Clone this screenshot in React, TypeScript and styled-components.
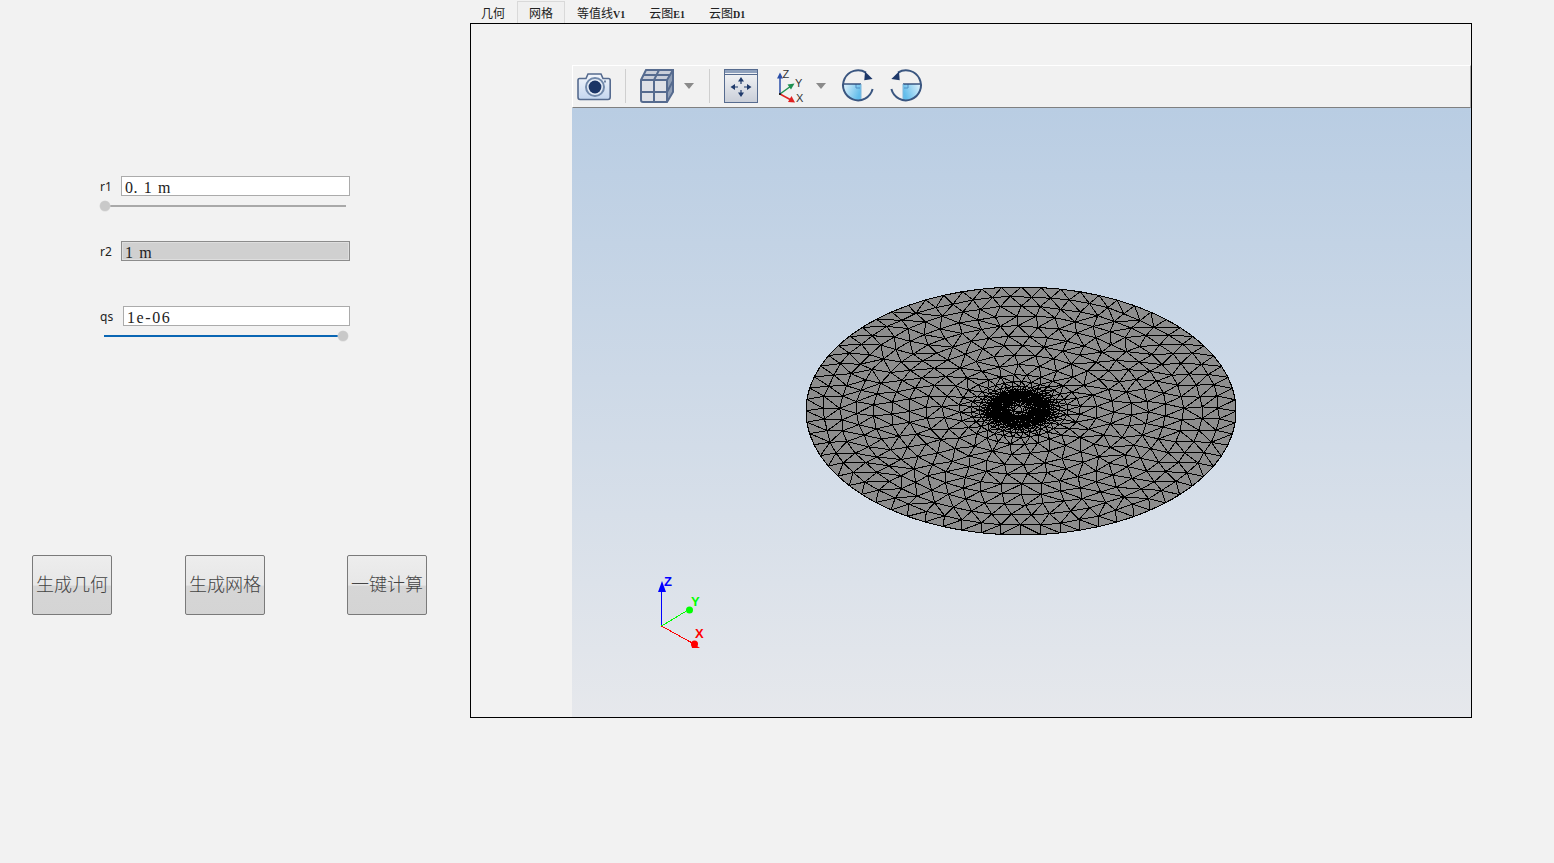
import { useMemo } from "react";
import styled, { createGlobalStyle } from "styled-components";

const CJK = `"Noto Sans CJK SC", "Liberation Serif", serif`;
const SERIF = `"Liberation Serif", "Noto Sans CJK SC", serif`;

const GlobalStyle = createGlobalStyle`
  html, body { margin: 0; padding: 0; background: #f2f2f2; }
`;

const Page = styled.div`
  display: flex;
  width: 1554px;
  height: 863px;
  overflow: hidden;
  background: #f2f2f2;
`;

const LeftPanel = styled.div`
  width: 470px;
  flex: none;
  display: flex;
  flex-direction: column;
  padding-top: 176px;
  box-sizing: border-box;
`;

const FieldRow = styled.div<{ $top?: number }>`
  display: flex;
  align-items: center;
  height: 20px;
  margin: ${(p) => p.$top ?? 0}px 0 0 100px;
  width: 250px;
`;

const FieldLabel = styled.label<{ $w: number }>`
  width: ${(p) => p.$w}px;
  flex: none;
  font: 12px "Noto Sans", sans-serif;
  color: #222;
`;

const ValueBox = styled.div<{ $off?: boolean; $spread?: number }>`
  flex: 1;
  height: 20px;
  box-sizing: border-box;
  border: 1px solid ${(p) => (p.$off ? "#8c8c8c" : "#ababab")};
  background: ${(p) => (p.$off ? "#d0d0d0" : "#fff")};
  box-shadow: ${(p) => (p.$off ? "inset 0 0 0 1px #dedede" : "none")};
  padding: 2px 0 0 3px;
  font: 16px/18px ${SERIF};
  letter-spacing: ${(p) => p.$spread ?? 0.6}px;
  word-spacing: 1px;
  color: #222;
  white-space: pre;
`;

const SliderTrack = styled.div<{ $left: number; $width: number; $on?: boolean }>`
  position: relative;
  height: 2px;
  margin: 9px 0 0 ${(p) => p.$left}px;
  width: ${(p) => p.$width}px;
  background: ${(p) => (p.$on ? "#0a66b4" : "#a9a9a9")};
`;

const SliderKnob = styled.span<{ $x: number }>`
  position: absolute;
  left: ${(p) => p.$x}px;
  top: -4px;
  width: 10px;
  height: 10px;
  border-radius: 50%;
  background: #c9c9c9;
  box-shadow: 0 0 0 0.5px #d8d8d8;
`;

const ButtonRow = styled.div`
  display: flex;
  margin-top: 218px;
  padding-left: 32px;
`;

const ActionButton = styled.button<{ $left?: number }>`
  width: 80px;
  height: 60px;
  margin-left: ${(p) => p.$left ?? 0}px;
  padding: 0 0 4px;
  box-sizing: border-box;
  border: 1px solid #7a7a7a;
  border-radius: 2px;
  background: linear-gradient(#ededed 0%, #e7e7e7 50%, #d6d6d6 52%, #d4d4d4 100%);
  font: 18px ${CJK};
  font-weight: 300;
  color: #444;
  white-space: nowrap;
`;

const RightPanel = styled.div`
  width: 1002px;
  flex: none;
  display: flex;
  flex-direction: column;
`;

const TabBar = styled.div`
  display: flex;
  height: 23px;
  margin-left: -1px;
  align-items: flex-end;
`;

const Tab = styled.div<{ $active?: boolean }>`
  height: 22px;
  box-sizing: border-box;
  padding: 2px 11px 0;
  border: 1px solid ${(p) => (p.$active ? "#d9d9d9" : "transparent")};
  border-bottom: none;
  background: ${(p) => (p.$active ? "#f0f0f0" : "transparent")};
  font: 12px/17px ${CJK};
  color: #222;
  white-space: nowrap;
`;

const TabMark = styled.span`
  font: bold 10px ${SERIF};
`;

const Frame = styled.div`
  height: 695px;
  box-sizing: border-box;
  border: 1px solid #000;
  padding: 41px 0 0 101px;
  display: flex;
`;

const Viewer = styled.div`
  flex: 1;
  display: flex;
  flex-direction: column;
`;

const ToolBar = styled.div`
  height: 43px;
  flex: none;
  box-sizing: border-box;
  display: flex;
  align-items: center;
  padding: 0 0 1px 4px;
  background: #f1f1f1;
  border-top: 1px solid #fff;
  border-left: 1px solid #fff;
  border-right: 1px solid #a8a8a8;
  border-bottom: 1px solid #808080;
`;

const ToolIcon = styled.svg<{ $left?: number }>`
  flex: none;
  display: block;
  overflow: visible;
  margin-left: ${(p) => p.$left ?? 0}px;
`;

const ToolSep = styled.span<{ $left: number }>`
  width: 1px;
  height: 34px;
  flex: none;
  margin-left: ${(p) => p.$left}px;
  background: #cfcfcf;
`;

const Caret = styled.span<{ $left: number }>`
  flex: none;
  margin-left: ${(p) => p.$left}px;
  width: 0;
  height: 0;
  border-left: 5px solid transparent;
  border-right: 5px solid transparent;
  border-top: 6px solid #8a8a8a;
`;

const Scene = styled.div`
  position: relative;
  flex: 1;
  display: flex;
  align-items: center;
  justify-content: center;
  background: linear-gradient(#b9cde3, #e6e8ec);
`;

const MeshSvg = styled.svg`
  display: block;
  margin: 0 1px 3px 0;
`;

const Triad = styled.svg`
  position: absolute;
  left: 70px;
  bottom: 67px;
`;

const AxisLetter = styled.text<{ $color: string; $size: number; $bold?: boolean }>`
  font: ${(p) => (p.$bold ? "bold " : "")}${(p) => p.$size}px "Liberation Sans", sans-serif;
  fill: ${(p) => p.$color};
`;

const STROKE = "#566b8f";

function CameraIcon() {
  return (
    <ToolIcon width="34" height="34" viewBox="0 0 34 34">
      <defs>
        <linearGradient id="camBody" x1="0" y1="0" x2="0" y2="1">
          <stop offset="0" stopColor="#f3f6fb" />
          <stop offset="1" stopColor="#c4d6ef" />
        </linearGradient>
      </defs>
      <path
        d="M2.5 9.5 H9 L11 5 H24 L26 9.5 H31.5 Q33.2 9.5 33.2 11.5 V28 Q33.2 30.5 31 30.5 H3 Q1 30.5 1 28 V11.5 Q1 9.5 2.5 9.5 Z"
        fill="url(#camBody)"
        stroke={STROKE}
        strokeWidth="1.6"
      />
      <circle cx="18" cy="18" r="9" fill="#e6edf7" stroke="#7189ab" strokeWidth="2" />
      <circle cx="18" cy="18" r="6.4" fill="#1b3566" />
      <rect x="27" y="11.5" width="2" height="2" fill="#6f83a3" />
    </ToolIcon>
  );
}

function CubeIcon() {
  return (
    <ToolIcon $left={14} width="34" height="34" viewBox="0 0 34 34">
      <path d="M1 11 L6 1 H33 L27 11 Z" fill="#c9ced9" />
      <path d="M1 11 H27 V33 H1 Z" fill="#dfe1e7" />
      <path d="M27 11 L33 1 V23 L27 33 Z" fill="#8e9db5" />
      <path
        d="M1 11 L6 1 H33 V23 L27 33 H3 Q1 33 1 31 Z M1 11 H27 L33 1 M27 11 V33 M14 11 V33 M1 23 H27 L33 12 M14 11 L19 1 M3.5 6 H30"
        fill="none"
        stroke={STROKE}
        strokeWidth="2"
      />
    </ToolIcon>
  );
}

function FitIcon() {
  return (
    <ToolIcon $left={14} width="34" height="34" viewBox="0 0 34 34">
      <defs>
        <linearGradient id="fitBody" x1="0" y1="0" x2="0" y2="1">
          <stop offset="0" stopColor="#f6f7f9" />
          <stop offset="1" stopColor="#c9ced8" />
        </linearGradient>
      </defs>
      <rect x="0.5" y="0.5" width="33" height="33" fill="url(#fitBody)" stroke={STROKE} />
      <rect x="1" y="1" width="32" height="3" fill="#8fa1bd" />
      <path d="M1 5.5 H33" stroke={STROKE} />
      <path d="M17 11 V15 M17 21 V25 M10 18 H14 M20 18 H24" stroke="#1f3a6b" strokeWidth="1.2" />
      <path
        d="M17 8 L14 12.5 H20 Z M17 28 L14 23.5 H20 Z M6.5 18 L11 15 V21 Z M27.5 18 L23 15 V21 Z"
        fill="#1f3a6b"
      />
    </ToolIcon>
  );
}

function AxesIcon() {
  return (
    <ToolIcon $left={17} width="34" height="34" viewBox="0 0 34 34">
      <path d="M5 25 V7" stroke="#2a4ea8" strokeWidth="1.5" />
      <path d="M5 3.5 L2 9.5 H8 Z" fill="#2a4ea8" />
      <path d="M5 25 L16 17" stroke="#1e9050" strokeWidth="1.5" />
      <path d="M19.5 14.5 L12.5 15.5 L16 20.5 Z" fill="#1e9050" />
      <path d="M5 25 L16 31" stroke="#e02020" strokeWidth="1.5" />
      <path d="M20 33.5 L13 33 L16.5 27 Z" fill="#e02020" />
      <rect x="4" y="24" width="2" height="2" fill="#222" />
      <AxisLetter $color="#333" $size={11} x="7.5" y="9">Z</AxisLetter>
      <AxisLetter $color="#333" $size={11} x="20" y="18">Y</AxisLetter>
      <AxisLetter $color="#333" $size={11} x="21" y="33">X</AxisLetter>
    </ToolIcon>
  );
}

function RotateIcon({ flip, left }: { flip?: boolean; left: number }) {
  const id = flip ? "rotFillB" : "rotFillA";
  return (
    <ToolIcon $left={left} width="36" height="36" viewBox="0 0 36 36">
      <defs>
        <linearGradient id={id} x1="0" y1="0" x2="1" y2="0.4">
          <stop offset="0" stopColor="#e2f3fc" />
          <stop offset="1" stopColor="#62bdeb" />
        </linearGradient>
      </defs>
      <g transform={flip ? "translate(36 0) scale(-1 1)" : undefined}>
        <path d="M2.4 16 H20 V32.4 A15 15 0 0 1 2.4 16 Z" fill={`url(#${id})`} />
        <path d="M15 16 V20 H19" fill="none" stroke="#4f8fc4" strokeWidth="1" />
        <path d="M2 16 H20" stroke="#2e4a78" strokeWidth="1.4" />
        <path d="M20 16 V32" stroke="#7fb7dc" strokeWidth="1" />
        <path d="M31.6 21 A15 15 0 1 1 25 4.6" fill="none" stroke="#3a5680" strokeWidth="2" />
        <path d="M24 3.5 L31.6 11 L23.3 12.2 Z" fill="#1d3869" />
      </g>
    </ToolIcon>
  );
}

function AxisTriad() {
  return (
    <Triad width="64" height="80" viewBox="0 0 64 80" shapeRendering="crispEdges">
      <path d="M19.5 56 V14" stroke="#0000ff" fill="none" />
      <path d="M19.5 56 L46 40" stroke="#00ff00" fill="none" />
      <path d="M19.5 56 L52 74" stroke="#ff0000" fill="none" />
      <g shapeRendering="auto">
        <path d="M20 11 L16 22 H24 Z" fill="#0000ff" />
        <circle cx="47.5" cy="40" r="3.5" fill="#00ff00" />
        <path d="M49 72 L58 78 H50 Z" fill="#ff0000" />
        <circle cx="52.5" cy="74" r="3.5" fill="#ff0000" />
        <AxisLetter $bold $color="#0000ff" $size={13} x="22" y="16">Z</AxisLetter>
        <AxisLetter $bold $color="#00ff00" $size={13} x="49" y="36">Y</AxisLetter>
        <AxisLetter $bold $color="#ff0000" $size={13} x="53" y="68">X</AxisLetter>
      </g>
    </Triad>
  );
}

type Pt = { x: number; y: number };

// points on jittered rings, fine around the hole and coarse at the rim
function meshPoints(): Pt[] {
  let seed = 41;
  const rnd = () => {
    seed = (seed * 16807) % 2147483647;
    return seed / 2147483647;
  };
  const size = (r: number) => {
    if (r < 0.06) return 0.024;
    if (r < 0.14) return 0.013;
    if (r < 0.36) return 0.013 + ((r - 0.14) / 0.22) * 0.079;
    return 0.092;
  };
  const pts: Pt[] = [];
  let r = 1;
  while (r > 0.01) {
    const h = size(r);
    const rim = r === 1;
    const n = Math.max(4, Math.round((2 * Math.PI * r) / h));
    const start = rnd() * 6.28;
    for (let i = 0; i < n; i++) {
      const jr = rim ? 0 : (rnd() - 0.5) * h * 0.14;
      const ja = rim ? 0 : ((rnd() - 0.5) * h * 0.14) / r;
      const a = start + (i / n) * Math.PI * 2 + ja;
      // the fine core sits a little up and to the left of the disc centre
      const pull = 1 - r;
      pts.push({
        x: (r + jr) * Math.cos(a) - 0.01 * pull,
        y: (r + jr) * Math.sin(a) - 0.016 * pull,
      });
    }
    r -= h * 0.87;
  }
  return pts;
}

// plain Bowyer-Watson, returns the unique edges
function triangulate(pts: Pt[]): [number, number][] {
  const all = [...pts, { x: -6, y: -6 }, { x: 6, y: -6 }, { x: 0, y: 8 }];
  const n = pts.length;
  type Tri = { a: number; b: number; c: number; ux: number; uy: number; rr: number };
  const make = (a: number, b: number, c: number): Tri => {
    const A = all[a];
    const B = all[b];
    const C = all[c];
    const d = 2 * (A.x * (B.y - C.y) + B.x * (C.y - A.y) + C.x * (A.y - B.y));
    const aa = A.x * A.x + A.y * A.y;
    const bb = B.x * B.x + B.y * B.y;
    const cc = C.x * C.x + C.y * C.y;
    const ux = (aa * (B.y - C.y) + bb * (C.y - A.y) + cc * (A.y - B.y)) / d;
    const uy = (aa * (C.x - B.x) + bb * (A.x - C.x) + cc * (B.x - A.x)) / d;
    return { a, b, c, ux, uy, rr: (A.x - ux) ** 2 + (A.y - uy) ** 2 };
  };
  let tris: Tri[] = [make(n, n + 1, n + 2)];
  for (let i = 0; i < n; i++) {
    const p = all[i];
    const keep: Tri[] = [];
    const open = new Map<number, [number, number]>();
    const flip = (u: number, v: number) => {
      const key = Math.min(u, v) * 100000 + Math.max(u, v);
      if (open.has(key)) open.delete(key);
      else open.set(key, [u, v]);
    };
    for (const t of tris) {
      if ((p.x - t.ux) ** 2 + (p.y - t.uy) ** 2 < t.rr) {
        flip(t.a, t.b);
        flip(t.b, t.c);
        flip(t.c, t.a);
      } else keep.push(t);
    }
    open.forEach(([u, v]) => keep.push(make(u, v, i)));
    tris = keep;
  }
  const edges = new Map<number, [number, number]>();
  for (const t of tris) {
    if (t.a >= n || t.b >= n || t.c >= n) continue;
    for (const [u, v] of [[t.a, t.b], [t.b, t.c], [t.c, t.a]]) {
      edges.set(Math.min(u, v) * 100000 + Math.max(u, v), [u, v]);
    }
  }
  return [...edges.values()];
}

function buildMesh(rx: number, ry: number) {
  const pts = meshPoints();
  let d = "";
  for (const [u, v] of triangulate(pts)) {
    const p = pts[u];
    const q = pts[v];
    d += `M${(p.x * rx + rx + 1).toFixed(1)} ${(p.y * ry + ry + 1).toFixed(1)}`;
    d += `L${(q.x * rx + rx + 1).toFixed(1)} ${(q.y * ry + ry + 1).toFixed(1)}`;
  }
  return d;
}

function MeshDisc() {
  const rx = 215;
  const ry = 124;
  const d = useMemo(() => buildMesh(rx, ry), []);
  return (
    <MeshSvg width={rx * 2 + 2} height={ry * 2 + 2} shapeRendering="crispEdges">
      <ellipse cx={rx + 1} cy={ry + 1} rx={rx} ry={ry} fill="#8d8d8d" stroke="#000" />
      <path d={d} fill="none" stroke="#000" strokeWidth="1" />
    </MeshSvg>
  );
}

export default function App() {
  return (
    <Page>
      <GlobalStyle />
      <LeftPanel>
        <FieldRow>
          <FieldLabel $w={21}>r1</FieldLabel>
          <ValueBox>0. 1 m</ValueBox>
        </FieldRow>
        <SliderTrack $left={100} $width={246}>
          <SliderKnob $x={0} />
        </SliderTrack>
        <FieldRow $top={34}>
          <FieldLabel $w={21}>r2</FieldLabel>
          <ValueBox $off>1 m</ValueBox>
        </FieldRow>
        <FieldRow $top={45}>
          <FieldLabel $w={23}>qs</FieldLabel>
          <ValueBox $spread={1.6}>1e-06</ValueBox>
        </FieldRow>
        <SliderTrack $left={104} $width={244} $on>
          <SliderKnob $x={234} />
        </SliderTrack>
        <ButtonRow>
          <ActionButton>生成几何</ActionButton>
          <ActionButton $left={73}>生成网格</ActionButton>
          <ActionButton $left={82}>一键计算</ActionButton>
        </ButtonRow>
      </LeftPanel>
      <RightPanel>
        <TabBar>
          <Tab>几何</Tab>
          <Tab $active>网格</Tab>
          <Tab>等值线<TabMark>V1</TabMark></Tab>
          <Tab>云图<TabMark>E1</TabMark></Tab>
          <Tab>云图<TabMark>D1</TabMark></Tab>
        </TabBar>
        <Frame>
          <Viewer>
            <ToolBar>
              <CameraIcon />
              <ToolSep $left={14} />
              <CubeIcon />
              <Caret $left={10} />
              <ToolSep $left={15} />
              <FitIcon />
              <AxesIcon />
              <Caret $left={7} />
              <RotateIcon left={15} />
              <RotateIcon flip left={10} />
            </ToolBar>
            <Scene>
              <MeshDisc />
              <AxisTriad />
            </Scene>
          </Viewer>
        </Frame>
      </RightPanel>
    </Page>
  );
}
